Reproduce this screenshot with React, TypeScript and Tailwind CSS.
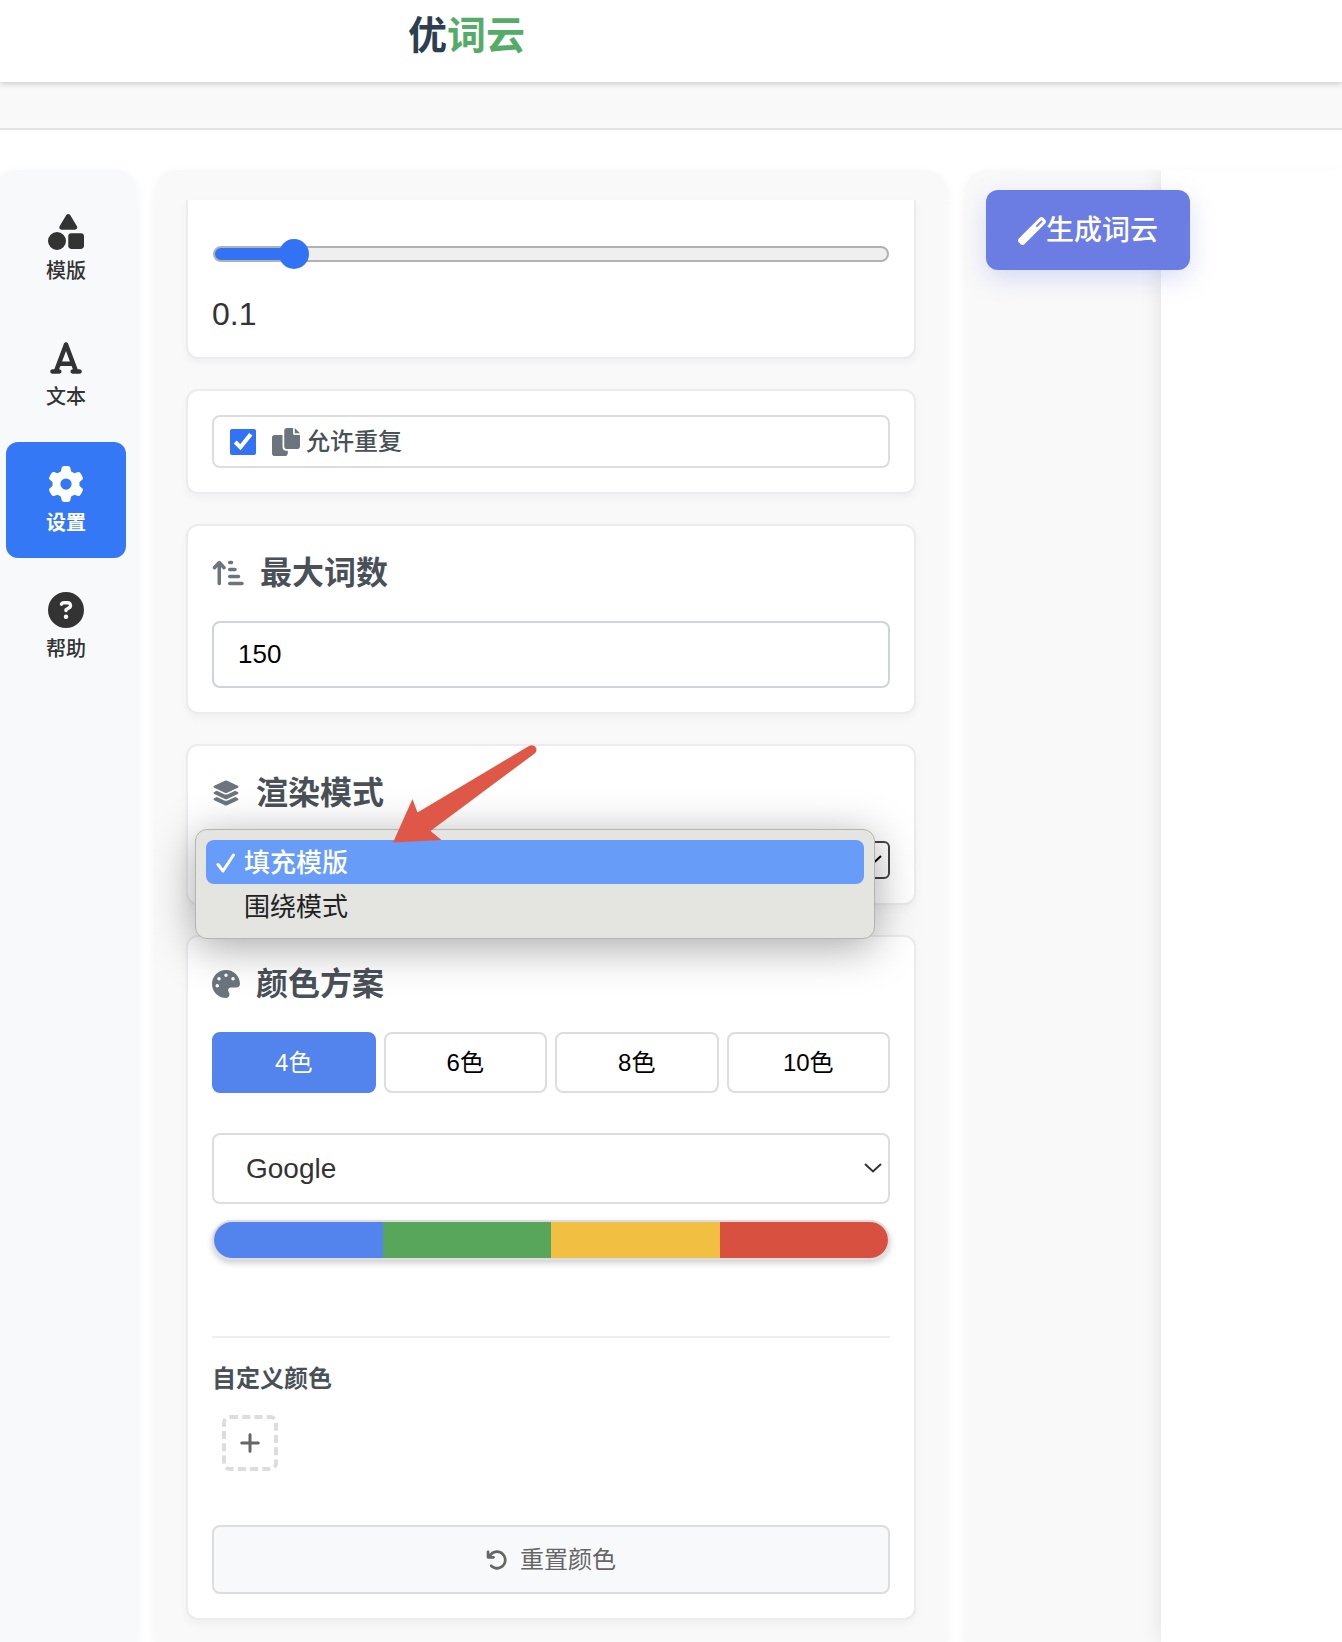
import React, { useState } from 'react';
import {
  FaShapes,
  FaFont,
  FaGear,
  FaCircleQuestion,
  FaArrowUpShortWide,
  FaLayerGroup,
  FaPalette,
  FaPlus,
  FaArrowRotateLeft,
  FaWandMagic,
} from 'react-icons/fa6';

const navItems = [
  { id: 'template', label: '模版', icon: FaShapes },
  { id: 'text', label: '文本', icon: FaFont },
  { id: 'settings', label: '设置', icon: FaGear },
  { id: 'help', label: '帮助', icon: FaCircleQuestion },
];

const colorCounts = [4, 6, 8, 10];

function CopyIcon({ className }: { className?: string }) {
  return (
    <svg viewBox="0 0 512 512" fill="currentColor" className={className} aria-hidden="true">
      <path d="M384 96L384 0h-112c-26.51 0-48 21.49-48 48v288c0 26.51 21.49 48 48 48H464c26.51 0 48-21.49 48-48V128h-95.1C398.4 128 384 113.6 384 96zM416 0v96h96L416 0zM192 352V128h-144c-26.51 0-48 21.49-48 48v288c0 26.51 21.49 48 48 48h192c26.51 0 48-21.49 48-48L288 416h-32C220.7 416 192 387.3 192 352z" />
    </svg>
  );
}

function Chevron({ className }: { className?: string }) {
  return (
    <svg viewBox="0 0 18 10" fill="none" stroke="currentColor" strokeWidth="2" className={className} aria-hidden="true">
      <path d="M1 1l8 7.5L17 1" />
    </svg>
  );
}

function Card({ className = '', children }: { className?: string; children: React.ReactNode }) {
  return (
    <section className={`relative rounded-xl border-2 border-[#ebebf0] bg-white px-6 shadow-[0_4px_8px_rgba(0,0,0,0.04)] ${className}`}>
      {children}
    </section>
  );
}

function CardTitle({ icon, htmlFor, children }: { icon: React.ReactNode; htmlFor: string; children: React.ReactNode }) {
  return (
    <label htmlFor={htmlFor} className="flex items-center gap-4 text-[32px] leading-[46px] font-semibold text-[#495057]">
      <span className="text-[28px] text-[#6c757d]">{icon}</span>
      {children}
    </label>
  );
}

function Sidebar() {
  const [active, setActive] = useState('settings');

  return (
    <nav className="-ml-1 w-[140px] shrink-0 rounded-t-[20px] bg-[#f8f9fb] px-[10px] py-5 shadow-[0_4px_12px_rgba(0,0,0,0.06)]">
      <div className="flex flex-col gap-[10px]">
        {navItems.map(({ id, label, icon: Icon }) => (
          <button
            key={id}
            onClick={() => setActive(id)}
            className={`flex flex-col items-center gap-2 rounded-xl pt-6 pb-[22px] text-[20px] leading-[26px] ${
              active === id ? 'bg-[#3478f6] font-bold text-white' : 'font-medium text-[#333]'
            }`}
          >
            <Icon className="h-9 w-9" />
            {label}
          </button>
        ))}
      </div>
    </nav>
  );
}

function ModeMenu() {
  return (
    <ul
      role="listbox"
      className="absolute top-[83px] right-[39px] left-[7px] z-10 h-[110px] rounded-xl border border-[#b4b4b2] bg-[#e4e5e0] p-[10px] text-[26px] text-[#222] shadow-[0_8px_44px_rgba(0,0,0,0.35)]"
    >
      <li
        role="option"
        aria-selected="true"
        className="flex items-center gap-2 rounded-lg bg-[#689cf9] pt-[2px] pl-[10px] leading-[42px] font-medium text-white"
      >
        <svg viewBox="0 0 20 20" fill="none" stroke="currentColor" strokeWidth="3" strokeLinecap="round" strokeLinejoin="round" className="h-5 w-5">
          <path d="M2 11.500l5 6.500L17.500 2" />
        </svg>
        填充模版
      </li>
      <li role="option" aria-selected="false" className="pt-[2px] pl-[38px] leading-[42px]">
        围绕模式
      </li>
    </ul>
  );
}

function PointerArrow() {
  return (
    <svg viewBox="0 0 146 100" className="pointer-events-none absolute top-[-3px] left-[205px] z-20 h-[100px] w-[146px]" fill="#df5847" aria-hidden="true">
      <path d="M0 99.500L19.500 56l5 13.500L136 3c3-1.500 6-.5 7 2s.5 4-2 6L37.500 88l11 9z" />
    </svg>
  );
}

function SettingsPanel() {
  const [count, setCount] = useState(4);

  return (
    <main className="w-[790px] shrink-0 rounded-t-[20px] bg-[#f9f9f9] px-[30px] pt-[30px] pb-5 shadow-[0_4px_12px_rgba(0,0,0,0.06)]">
      <div className="flex flex-col gap-[30px]">
        <Card className="h-[159px] rounded-t-none border-t-0 pt-[38px]">
          <div className="px-px">
            <input
              type="range"
              min="0"
              max="1"
              step="0.1"
              defaultValue="0.1"
              aria-label="间距"
              className="block h-8 w-full appearance-none bg-transparent [&::-webkit-slider-runnable-track]:h-4 [&::-webkit-slider-runnable-track]:rounded-full [&::-webkit-slider-runnable-track]:border-2 [&::-webkit-slider-runnable-track]:border-[#b2b2b2] [&::-webkit-slider-runnable-track]:bg-[linear-gradient(to_right,#3273f6_80px,#efefef_80px)] [&::-webkit-slider-thumb]:-mt-[9px] [&::-webkit-slider-thumb]:h-[30px] [&::-webkit-slider-thumb]:w-[30px] [&::-webkit-slider-thumb]:appearance-none [&::-webkit-slider-thumb]:rounded-full [&::-webkit-slider-thumb]:bg-[#3273f6]"
            />
          </div>
          <output className="mt-6 block text-[32px] leading-10 text-[#333]">0.1</output>
        </Card>

        <Card className="py-6">
          <label className="flex h-[53px] items-center rounded-lg border-2 border-[#ddd] px-4 text-[24px] leading-8 font-medium text-[#495057]">
            <input type="checkbox" defaultChecked className="mr-4 h-[26px] w-[26px] accent-[#3273f6]" />
            <CopyIcon className="mr-[6px] h-7 w-7 text-[#6c757d]" />
            允许重复
          </label>
        </Card>

        <Card className="py-6">
          <CardTitle htmlFor="max-words" icon={<FaArrowUpShortWide className="h-7 w-8" />}>
            最大词数
          </CardTitle>
          <input
            id="max-words"
            type="text"
            inputMode="numeric"
            defaultValue="150"
            className="mt-[25px] block h-[67px] w-full rounded-lg border-2 border-[#ced4da] bg-white px-6 text-[26px] text-black"
          />
        </Card>

        <Card className="z-10 py-6">
          <CardTitle htmlFor="render-mode" icon={<FaLayerGroup />}>
            渲染模式
          </CardTitle>
          <div className="relative mt-[25px]">
            <select
              id="render-mode"
              defaultValue="fill"
              className="block h-[38px] w-full appearance-none rounded-md border-2 border-[#444] bg-white px-2 text-[26px] leading-8 text-black"
            >
              <option value="fill">填充模版</option>
              <option value="around">围绕模式</option>
            </select>
            <Chevron className="pointer-events-none absolute top-[14px] right-2 h-[10px] w-[18px] text-black" />
          </div>
          <ModeMenu />
          <PointerArrow />
        </Card>

        <Card className="py-6">
          <CardTitle htmlFor="palette" icon={<FaPalette />}>
            颜色方案
          </CardTitle>
          <div className="mt-[25px] grid grid-cols-4 gap-2">
            {colorCounts.map((n) => (
              <button
                key={n}
                onClick={() => setCount(n)}
                className={`h-[61px] rounded-lg border-2 text-[24px] leading-8 ${
                  count === n ? 'border-[#5383ec] bg-[#5383ec] text-white' : 'border-[#ddd] bg-white text-black'
                }`}
              >
                {n}色
              </button>
            ))}
          </div>

          <div className="relative mt-10">
            <select
              id="palette"
              className="block h-[71px] w-full appearance-none rounded-lg border-2 border-[#ddd] bg-white px-8 text-[28px] text-[#333]"
            >
              <option>Google</option>
            </select>
            <Chevron className="pointer-events-none absolute top-[30px] right-2 h-[10px] w-[18px] text-[#333]" />
          </div>

          <div className="mt-4 flex h-10 overflow-hidden rounded-[20px] border-2 border-[#ddd] shadow-[0_3px_6px_rgba(0,0,0,0.2)]">
            <span className="flex-1 bg-[#5383ec]" />
            <span className="flex-1 bg-[#58a55c]" />
            <span className="flex-1 bg-[#f1bf42]" />
            <span className="flex-1 bg-[#d85040]" />
          </div>

          <div className="mt-[76px] border-t-2 border-[#eee] pt-6">
            <h3 className="text-[24px] leading-[34px] font-semibold text-[#495057]">自定义颜色</h3>
            <div className="px-[10px] pt-[19px] pb-[10px]">
              <button
                aria-label="添加颜色"
                className="flex h-14 w-14 items-center justify-center rounded-lg border-4 border-dashed border-[#ddd] bg-white text-[#666]"
              >
                <FaPlus className="h-6 w-6" />
              </button>
            </div>
          </div>

          <button className="mt-11 flex h-[69px] w-full items-center justify-center gap-3 rounded-lg border-2 border-[#ddd] bg-[#f8f9fb] text-[24px] leading-8 text-[#666]">
            <FaArrowRotateLeft className="h-[22px] w-[22px]" />
            重置颜色
          </button>
        </Card>
      </div>
    </main>
  );
}

function PreviewPanel() {
  return (
    <aside className="relative flex-1 rounded-tl-[20px] bg-[#f9f9f9] pl-[195px] shadow-[0_4px_12px_rgba(0,0,0,0.06)]">
      <div className="h-full bg-white shadow-[0_0_20px_rgba(0,0,0,0.1)] [clip-path:inset(0_0_0_-40px)]" />
      <button className="absolute top-5 left-5 flex h-20 w-[204px] items-center justify-center rounded-xl bg-[#6b7de3] pt-[2px] text-[28px] leading-9 font-medium text-white shadow-[0_8px_24px_rgba(107,125,227,0.25)]">
        <FaWandMagic className="h-7 w-7" />
        生成词云
      </button>
    </aside>
  );
}

export default function App() {
  return (
    <div className="flex min-h-screen flex-col overflow-hidden bg-white font-['Liberation_Sans','Noto_Sans_CJK_SC',sans-serif]">
      <header className="relative h-[82px] bg-white px-[408px] pt-2 shadow-[0_2px_6px_rgba(0,0,0,0.18)]">
        <h1 className="text-[39px] leading-[56px] font-bold whitespace-nowrap text-[#2c3e50]">
          优<span className="text-[#55ac68]">词云</span>
        </h1>
      </header>
      <div className="h-12 border-b-2 border-[#e3e3e3] bg-[#f9f9f9]" />
      <div className="flex flex-1 gap-5 pt-10">
        <Sidebar />
        <SettingsPanel />
        <PreviewPanel />
      </div>
    </div>
  );
}
